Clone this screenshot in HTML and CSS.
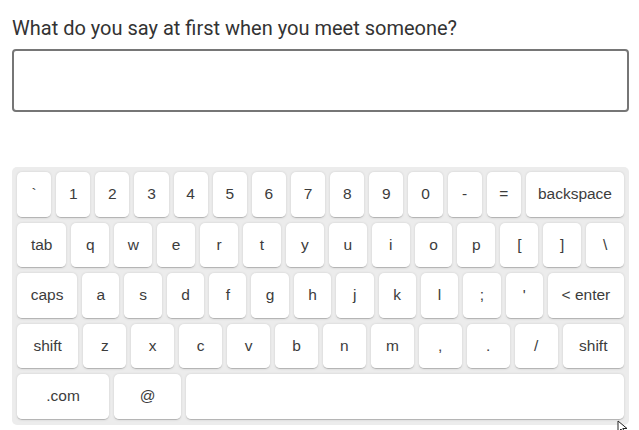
FILE: index.html
```html
<!DOCTYPE html>
<html>
<head>
<meta charset="utf-8">
<link rel="stylesheet" href="styles.css">
</head>
<body>
<div class="page">
  <div class="question">What do you say at first when you meet someone?</div>
  <div class="answer"></div>
  <div class="keyboard">
    <div class="row">
      <div class="key">`</div><div class="key">1</div><div class="key">2</div><div class="key">3</div><div class="key">4</div><div class="key">5</div><div class="key">6</div><div class="key">7</div><div class="key">8</div><div class="key">9</div><div class="key">0</div><div class="key">-</div><div class="key">=</div><div class="key fn">backspace</div>
    </div>
    <div class="row">
      <div class="key fn">tab</div><div class="key">q</div><div class="key">w</div><div class="key">e</div><div class="key">r</div><div class="key">t</div><div class="key">y</div><div class="key">u</div><div class="key">i</div><div class="key">o</div><div class="key">p</div><div class="key">[</div><div class="key">]</div><div class="key">\</div>
    </div>
    <div class="row">
      <div class="key fn">caps</div><div class="key">a</div><div class="key">s</div><div class="key">d</div><div class="key">f</div><div class="key">g</div><div class="key">h</div><div class="key">j</div><div class="key">k</div><div class="key">l</div><div class="key">;</div><div class="key">'</div><div class="key fn">&lt; enter</div>
    </div>
    <div class="row">
      <div class="key fn">shift</div><div class="key">z</div><div class="key">x</div><div class="key">c</div><div class="key">v</div><div class="key">b</div><div class="key">n</div><div class="key">m</div><div class="key">,</div><div class="key">.</div><div class="key">/</div><div class="key fn">shift</div>
    </div>
    <div class="row">
      <div class="key dotcom">.com</div><div class="key at">@</div><div class="key space"></div>
    </div>
  </div>
  <svg class="cursor" width="12" height="14" viewBox="0 0 12 14"><path d="M1 1 L1 12 L4 9 L6.5 13.5 L8 12.8 L5.8 8.5 L10 8.5 Z" fill="#fff" stroke="#222" stroke-width="1"/></svg>
</div>
</body>
</html>
```
FILE: styles.css
```css
html, body {
  margin: 0;
  padding: 0;
  background: #fff;
}
.page {
  position: relative;
  width: 617px;
  height: 430px;
  padding: 0 0 0 12px;
  overflow: hidden;
}
.question {
  font-family: Roboto, "Liberation Sans", sans-serif;
  font-size: 20px;
  line-height: 24px;
  color: #333;
  padding-top: 16px;
  margin-bottom: 9px;
}
.answer {
  height: 63px;
  box-sizing: border-box;
  border: 2px solid #767676;
  border-radius: 4px;
  background: #fff;
}
.keyboard {
  margin-top: 55px;
  background: #ececec;
  border-radius: 5px;
  padding: 5px;
  display: flex;
  flex-direction: column;
  gap: 5px;
  font-family: "Liberation Sans", Arial, sans-serif;
  font-size: 15.5px;
  color: #3c3c3c;
}
.row {
  display: flex;
  gap: 5px;
}
.key {
  flex: 1 1 auto;
  width: 20px;
  height: 45.5px;
  box-sizing: border-box;
  padding: 5px;
  background: #fff;
  border-radius: 5px;
  border-bottom: 1px solid #b5b5b5;
  box-shadow: 0 0 3px -1px rgba(0, 0, 0, 0.3);
  display: flex;
  align-items: center;
  justify-content: center;
  white-space: nowrap;
}
.key.fn {
  width: auto;
}
.key.dotcom {
  flex: 0 0 92px;
}
.key.at {
  flex: 0 0 67px;
}
.key.space {
  flex: 1 1 auto;
}
.cursor {
  position: absolute;
  left: 617px;
  top: 420px;
}
```
